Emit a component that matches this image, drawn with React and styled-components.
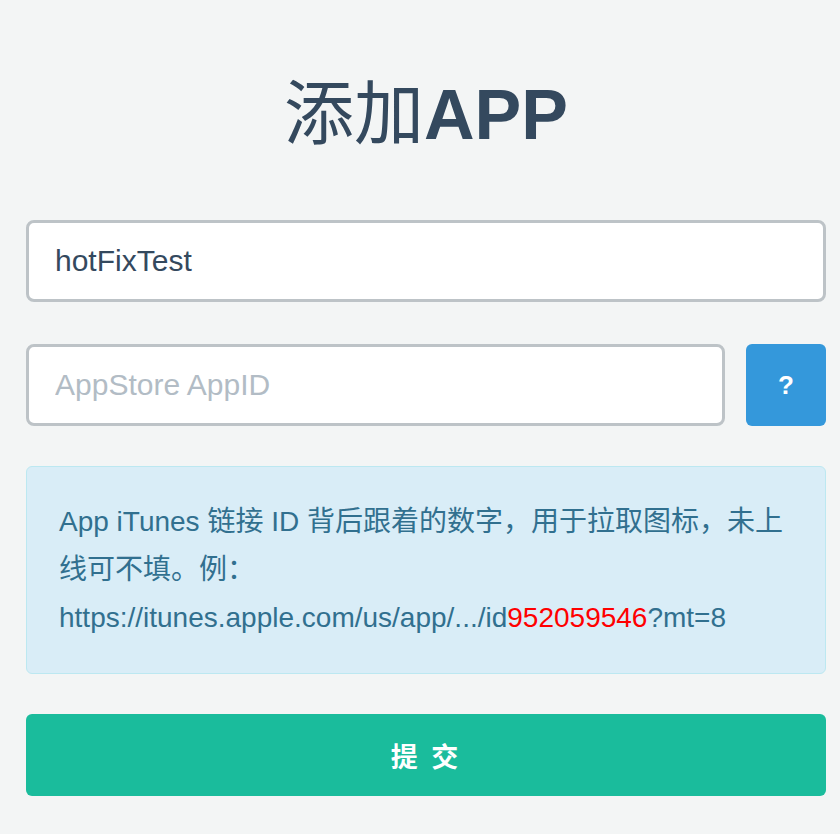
import React from 'react';
import styled, { createGlobalStyle } from 'styled-components';

const GlobalStyle = createGlobalStyle`
  html, body {
    margin: 0;
    padding: 0;
    background: #f3f5f5;
  }
  body {
    font-family: "Liberation Sans", "Noto Sans CJK SC", sans-serif;
    color: #34495e;
  }
`;

const App = () => {
  return (
    <>
      <GlobalStyle />
      <Page>
        <Form>
          <Title>
            <Han>添加</Han>APP
          </Title>
          <TextInput defaultValue="hotFixTest" />
          <Row>
            <TextInput $grow placeholder="AppStore AppID" />
            <HelpButton type="button">?</HelpButton>
          </Row>
          <Alert>
            App iTunes 链接 ID 背后跟着的数字，用于拉取图标，未上线可不填。例：
            <br />
            https://itunes.apple.com/us/app/.../id<Red>952059546</Red>?mt=8
          </Alert>
          <SubmitButton type="button">提 交</SubmitButton>
        </Form>
      </Page>
    </>
  );
};

// 页面外框
const Page = styled.div`
  padding: 0 14px 40px 26px;
  min-height: 834px;
  box-sizing: border-box;
`;

const Form = styled.div`
  width: 800px;
  display: flex;
  flex-direction: column;
  gap: 40px;
`;

const Title = styled.h1`
  margin: 70px 0 20px;
  font-size: 70px;
  line-height: 90px;
  font-weight: bold;
  text-align: center;
  color: #34495e;
`;

// 标题里的中文笔画偏细
const Han = styled.span`
  font-weight: normal;
`;

const Row = styled.div`
  margin-top: 2px;
  display: flex;
  gap: 21px;
  align-items: stretch;
`;

const TextInput = styled.input`
  flex: ${(p) => (p.$grow ? 1 : 'none')};
  min-width: 0;
  height: 82px;
  box-sizing: border-box;
  border: 3px solid #bdc3c7;
  border-radius: 8px;
  background: #fff;
  padding: 0 26px;
  font-family: "Liberation Sans", "Noto Sans CJK SC", sans-serif;
  font-size: 30px;
  color: #34495e;
  outline: none;

  &::placeholder {
    color: #b2bcc5;
  }
`;

const HelpButton = styled.button`
  width: 80px;
  height: 82px;
  border: none;
  border-radius: 6px;
  background: #3498db;
  color: #fff;
  font-family: "Liberation Sans", sans-serif;
  font-size: 26px;
  font-weight: bold;
  cursor: pointer;
`;

const Alert = styled.div`
  border: 1px solid #bce8f1;
  border-radius: 6px;
  background: #d9edf7;
  color: #31708f;
  padding: 31px 32px 31px;
  font-size: 28px;
  line-height: 48px;
`;

const Red = styled.span`
  color: #ff0000;
`;

const SubmitButton = styled.button`
  height: 82px;
  border: none;
  border-radius: 6px;
  background: #1abc9c;
  color: #fff;
  font-family: "Liberation Sans", "Noto Sans CJK SC", sans-serif;
  font-size: 27px;
  font-weight: bold;
  letter-spacing: 3px;
  cursor: pointer;
`;

export default App;
